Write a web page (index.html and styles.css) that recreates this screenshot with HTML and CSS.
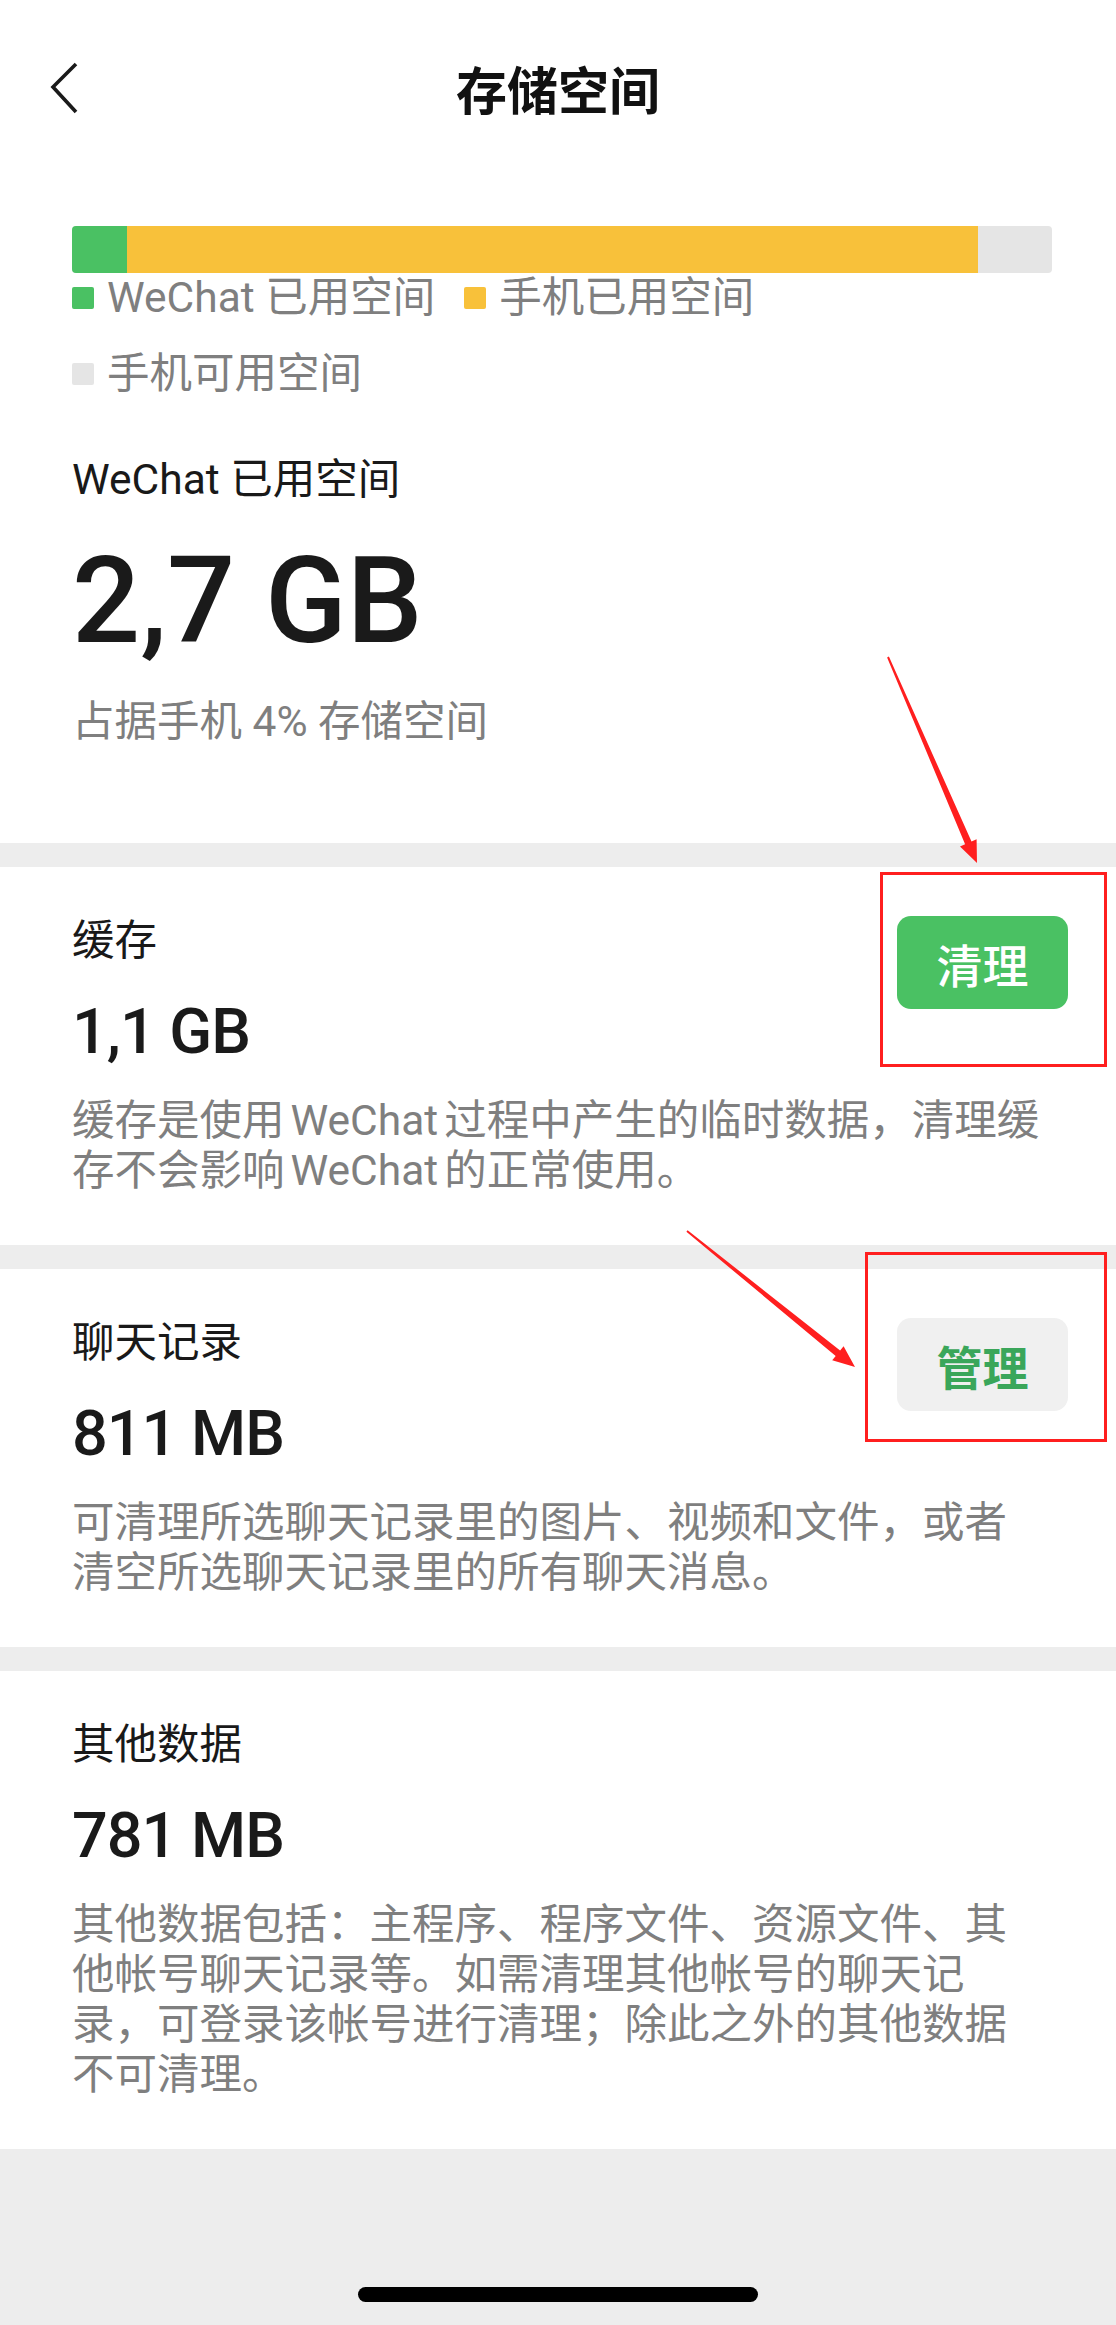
FILE: index.html
```html
<!DOCTYPE html>
<html lang="zh-CN">
<head>
<meta charset="utf-8">
<title>存储空间</title>
<link rel="stylesheet" href="styles.css">
</head>
<body>
<div class="page">
  <div class="top">
    <header class="nav">
      <div class="nav-left">
        <svg class="back" width="32" height="52" viewBox="0 0 32 52" aria-hidden="true">
          <polyline points="28,2 5,25 28,50" fill="none" stroke="#1a1a1a" stroke-width="3.6" stroke-linejoin="miter"/>
        </svg>
      </div>
      <h1 class="nav-title">存储空间</h1>
      <div class="nav-right"></div>
    </header>

    <section class="summary">
      <div class="bar">
        <span class="seg seg-green" style="width:5.6%"></span>
        <span class="seg seg-yellow" style="width:86.8%"></span>
      </div>
      <div class="legend">
        <div class="legend-item"><span class="dot dot-green"></span><span>WeChat 已用空间</span></div>
        <div class="legend-item"><span class="dot dot-yellow"></span><span>手机已用空间</span></div>
        <div class="legend-item"><span class="dot dot-gray"></span><span>手机可用空间</span></div>
      </div>
      <div class="label">WeChat 已用空间</div>
      <div class="total">2,7 GB</div>
      <div class="subtitle">占据手机 4% 存储空间</div>
    </section>
  </div>

  <section class="card">
    <div class="card-head">
      <div class="card-info">
        <div class="card-name">缓存</div>
        <div class="card-size">1,1 GB</div>
      </div>
      <button class="btn btn-primary" type="button">清理</button>
    </div>
    <p class="card-desc">缓存是使用<span class="latin">WeChat</span>过程中产生的临时数据，清理缓存不会影响<span class="latin">WeChat</span>的正常使用。</p>
  </section>

  <section class="card">
    <div class="card-head">
      <div class="card-info">
        <div class="card-name">聊天记录</div>
        <div class="card-size">811 MB</div>
      </div>
      <button class="btn btn-secondary" type="button">管理</button>
    </div>
    <p class="card-desc">可清理所选聊天记录里的图片、视频和文件，或者清空所选聊天记录里的所有聊天消息。</p>
  </section>

  <section class="card">
    <div class="card-head">
      <div class="card-info">
        <div class="card-name">其他数据</div>
        <div class="card-size">781 MB</div>
      </div>
    </div>
    <p class="card-desc">其他数据包括：主程序、程序文件、资源文件、其他帐号聊天记录等。如需清理其他帐号的聊天记录，可登录该帐号进行清理；除此之外的其他数据不可清理。</p>
  </section>

  <footer class="home">
    <span class="home-bar"></span>
  </footer>

  <svg class="annot" width="1116" height="2325" viewBox="0 0 1116 2325" aria-hidden="true">
    <rect x="881.5" y="873.5" width="224" height="192" fill="none" stroke="#ff1f1f" stroke-width="3"/>
    <rect x="866.5" y="1253.5" width="239" height="187" fill="none" stroke="#ff1f1f" stroke-width="3"/>
    <polygon fill="#ff1f1f" points="887.1,657.4 965.1,844.2 960.0,846.4 977,863 976.6,839.2 971.5,841.4 888.9,656.6"/>
    <polygon fill="#ff1f1f" points="686.4,1231.8 835.7,1355.9 832.2,1360.2 855,1367 843.6,1346.2 840.1,1350.5 687.6,1230.2"/>
  </svg>
</div>
</body>
</html>
```

FILE: styles.css
```css
html, body {
  margin: 0;
  padding: 0;
}

body {
  background: #ededed;
}

.page {
  position: relative;
  width: 1116px;
  min-height: 2325px;
  display: flex;
  flex-direction: column;
  gap: 24px;
  font-family: Roboto, "Noto Sans CJK SC", sans-serif;
  color: #191919;
}

.top {
  background: #ffffff;
}

.nav {
  height: 176px;
  display: grid;
  grid-template-columns: 1fr auto 1fr;
  align-items: center;
}

.nav-left {
  display: flex;
  align-items: center;
}

.back {
  display: block;
  margin-left: 48px;
}

.nav-title {
  margin: 0;
  font-family: "Noto Sans CJK SC", sans-serif;
  font-size: 51px;
  font-weight: 700;
  line-height: 1;
  color: #111111;
}

.summary {
  padding: 50px 64px 96px 72px;
}

.bar {
  display: flex;
  height: 47px;
  border-radius: 4px;
  overflow: hidden;
  background: #e5e5e5;
}

.seg {
  display: block;
  height: 100%;
}

.seg-green {
  background: #4ac163;
}

.seg-yellow {
  background: #f8c13a;
}

.legend {
  display: flex;
  flex-wrap: wrap;
  column-gap: 29px;
  row-gap: 26px;
  font-size: 42.5px;
  line-height: 50px;
  color: #7f7f7f;
}

.legend-item {
  display: flex;
  align-items: center;
  gap: 13px;
}

.dot {
  display: block;
  width: 22px;
  height: 22px;
  border-radius: 2px;
}

.dot-green {
  background: #4ac163;
}

.dot-yellow {
  background: #f8c13a;
}

.dot-gray {
  background: #e5e5e5;
}

.label {
  margin-top: 56px;
  font-size: 42.5px;
  line-height: 50px;
}

.total {
  margin-top: 24px;
  font-size: 120px;
  line-height: 144px;
  font-weight: 500;
  color: #1a1a1a;
}

.subtitle {
  margin-top: 24px;
  font-size: 42.5px;
  line-height: 50px;
  color: #7f7f7f;
}

.card {
  background: #ffffff;
  padding: 49px 0 49px 72px;
}

.card-head {
  display: flex;
  justify-content: space-between;
  align-items: flex-start;
  padding-right: 48px;
}

.card-name {
  font-size: 42.5px;
  line-height: 50px;
}

.card-size {
  margin-top: 28px;
  font-size: 63px;
  line-height: 76px;
  font-weight: 500;
  letter-spacing: -1px;
  color: #1a1a1a;
}

.btn {
  width: 171px;
  height: 93px;
  border: 0;
  padding: 0;
  margin: 0;
  border-radius: 14px;
  display: flex;
  align-items: center;
  justify-content: center;
  font-family: "Noto Sans CJK SC", sans-serif;
  font-size: 46px;
  line-height: 1;
}

.btn-primary {
  background: #4ac163;
  color: #ffffff;
  font-weight: 500;
}

.btn-secondary {
  background: #f0f0f0;
  color: #3aa65a;
  font-weight: 700;
}

.card-desc {
  margin: 26px 0 0 0;
  width: 974px;
  font-size: 42.5px;
  line-height: 50px;
  color: #7f7f7f;
}

.latin {
  margin: 0 6px;
}

.home {
  flex: 1;
  display: flex;
  align-items: flex-end;
  justify-content: center;
  padding-bottom: 23px;
}

.home-bar {
  display: block;
  width: 400px;
  height: 15px;
  border-radius: 8px;
  background: #000000;
}

.annot {
  position: absolute;
  top: 0;
  left: 0;
  pointer-events: none;
}
```
